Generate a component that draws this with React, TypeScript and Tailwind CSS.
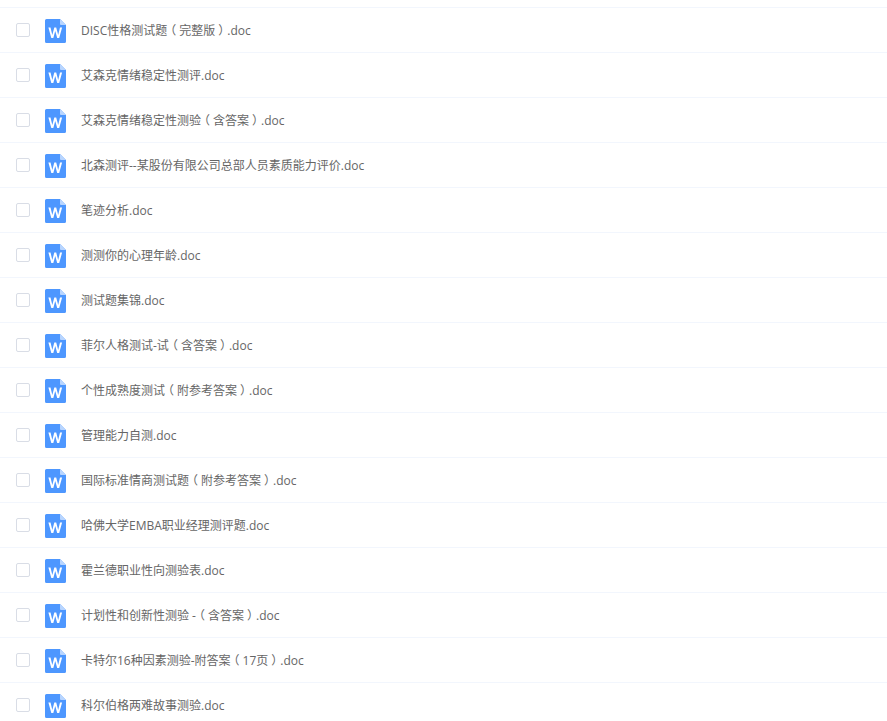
const files = [
  "DISC性格测试题（完整版）.doc",
  "艾森克情绪稳定性测评.doc",
  "艾森克情绪稳定性测验（含答案）.doc",
  "北森测评--某股份有限公司总部人员素质能力评价.doc",
  "笔迹分析.doc",
  "测测你的心理年龄.doc",
  "测试题集锦.doc",
  "菲尔人格测试-试（含答案）.doc",
  "个性成熟度测试（附参考答案）.doc",
  "管理能力自测.doc",
  "国际标准情商测试题（附参考答案）.doc",
  "哈佛大学EMBA职业经理测评题.doc",
  "霍兰德职业性向测验表.doc",
  "计划性和创新性测验 -（含答案）.doc",
  "卡特尔16种因素测验-附答案（17页）.doc",
  "科尔伯格两难故事测验.doc",
];

function WordIcon() {
  return (
    <svg width="21" height="24" viewBox="0 0 21 24" className="block shrink-0">
      <path d="M1.5 0H15L21 6V22.5a1.5 1.5 0 0 1-1.5 1.5H1.5A1.5 1.5 0 0 1 0 22.5V1.5A1.5 1.5 0 0 1 1.5 0Z" fill="#4d97ff" />
      <path d="M15 0L21 6H16a1 1 0 0 1-1-1Z" fill="#b8d5ff" />
      <path d="M3.4 8.6H5.5L7.3 16L9.3 8.6H11.2L13.2 16L15 8.6H17.1L14.2 19H12.2L10.25 12L8.3 19H6.3Z" fill="#ffffff" />
    </svg>
  );
}

function FileName({ name }: { name: string }) {
  return (
    <span className="ml-[15px] whitespace-nowrap pt-0.5 leading-[20px]">
      {name.split(/([（）])/).map((part, i) =>
        part === "（" || part === "）" ? (
          <span key={i} className="mx-[3px] [font-feature-settings:'halt']">{part}</span>
        ) : (
          part
        ),
      )}
    </span>
  );
}

export default function App() {
  return (
    <div className="h-[721px] w-[887px] overflow-hidden bg-white font-['Open_Sans','Noto_Sans_CJK_SC',sans-serif] text-xs text-[#666666]">
      <div className="h-2 border-b border-[#f2f6fd]" />
      {files.map((name) => (
        <div key={name} className="flex h-[45px] items-center border-b border-[#f2f6fd] pl-4">
          <span className="h-[14px] w-[14px] shrink-0 rounded-[2px] border border-[#d9dde6] bg-white" />
          <span className="ml-[15px] flex pt-0.5">
            <WordIcon />
          </span>
          <FileName name={name} />
        </div>
      ))}
    </div>
  );
}
